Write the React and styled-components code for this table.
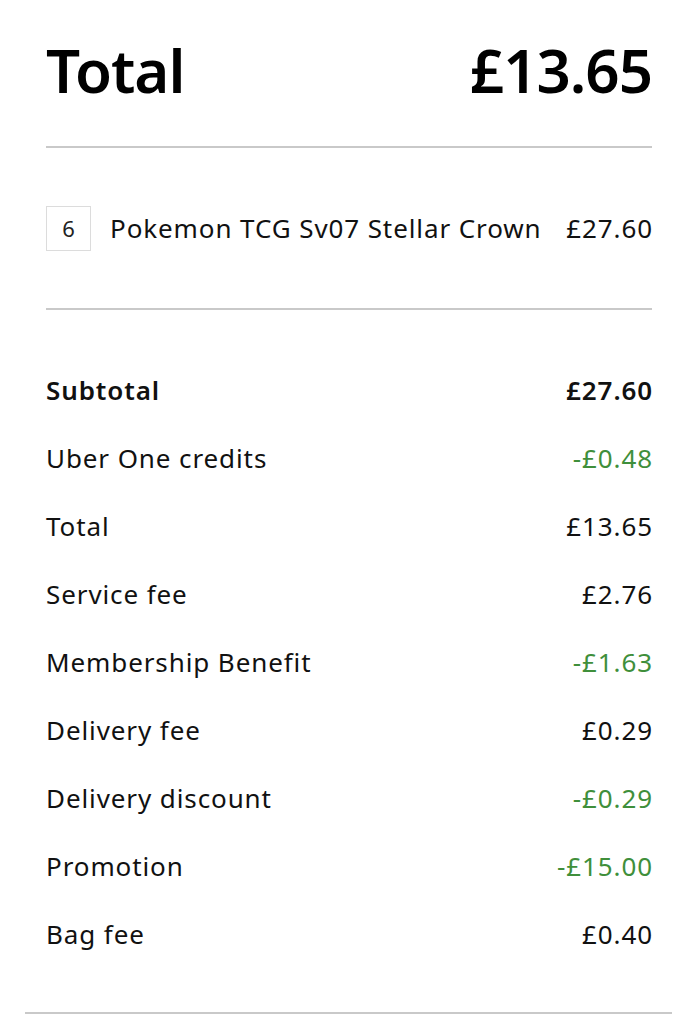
import React from "react";
import styled, { createGlobalStyle } from "styled-components";

const GlobalStyle = createGlobalStyle`
  body {
    margin: 0;
    background: #ffffff;
    font-family: "Noto Sans", "Liberation Sans", sans-serif;
    color: #111111;
  }
`;

const lines = [
  { label: "Subtotal", amount: "£27.60", bold: true },
  { label: "Uber One credits", amount: "-£0.48", green: true },
  { label: "Total", amount: "£13.65" },
  { label: "Service fee", amount: "£2.76" },
  { label: "Membership Benefit", amount: "-£1.63", green: true },
  { label: "Delivery fee", amount: "£0.29" },
  { label: "Delivery discount", amount: "-£0.29", green: true },
  { label: "Promotion", amount: "-£15.00", green: true },
  { label: "Bag fee", amount: "£0.40" },
];

const App = () => {
  return (
    <React.Fragment>
      <GlobalStyle />
      <Container>
        <Header>
          <BigText>Total</BigText>
          <BigText>£13.65</BigText>
        </Header>
        <Divider />
        <ItemRow>
          <QtyBox>6</QtyBox>
          <ItemName>Pokemon TCG Sv07 Stellar Crown</ItemName>
          <ItemPrice>£27.60</ItemPrice>
        </ItemRow>
        <Divider />
        <Summary>
          {lines.map((line) => (
            <Row key={line.label}>
              <Label $bold={line.bold}>{line.label}</Label>
              <Amount $bold={line.bold} $green={line.green}>
                {line.amount}
              </Amount>
            </Row>
          ))}
        </Summary>
        <Divider $wide />
      </Container>
    </React.Fragment>
  );
};

const Container = styled.div`
  width: 606px;
  margin: 0 auto 0 46px;
`;

const Header = styled.div`
  display: flex;
  justify-content: space-between;
  align-items: center;
  padding: 33px 0 39px;
`;

const BigText = styled.div`
  font-size: 60px;
  line-height: 74px;
  font-weight: 600;
  letter-spacing: -1px;
  color: #000000;
`;

const Divider = styled.div`
  height: 2px;
  background: #c9c9c9;
  margin: ${(p) => (p.$wide ? "0 -20px 0 -21px" : "0")};
`;

const ItemRow = styled.div`
  height: 160px;
  display: flex;
  align-items: center;
  gap: 19px;
`;

const QtyBox = styled.div`
  width: 43px;
  height: 43px;
  border: 1px solid #dcdcdc;
  display: flex;
  align-items: center;
  justify-content: center;
  font-size: 22px;
  color: #222222;
  flex-shrink: 0;
`;

const BodyText = styled.div`
  font-size: 26px;
  letter-spacing: 0.9px;
  color: #111111;
`;

const ItemName = styled(BodyText)`
  flex: 1;
`;

const ItemPrice = styled(BodyText)`
  margin-right: -1px;
`;

const Summary = styled.div`
  padding: 46px 0 44px;
`;

const Row = styled.div`
  height: 68px;
  display: flex;
  justify-content: space-between;
  align-items: center;
`;

const Label = styled(BodyText)`
  font-weight: ${(p) => (p.$bold ? 600 : 400)};
`;

const Amount = styled(BodyText)`
  margin-right: -1px;
  font-weight: ${(p) => (p.$bold ? 600 : 400)};
  color: ${(p) => (p.$green ? "#3f8f3b" : "#111111")};
`;

export default App;
